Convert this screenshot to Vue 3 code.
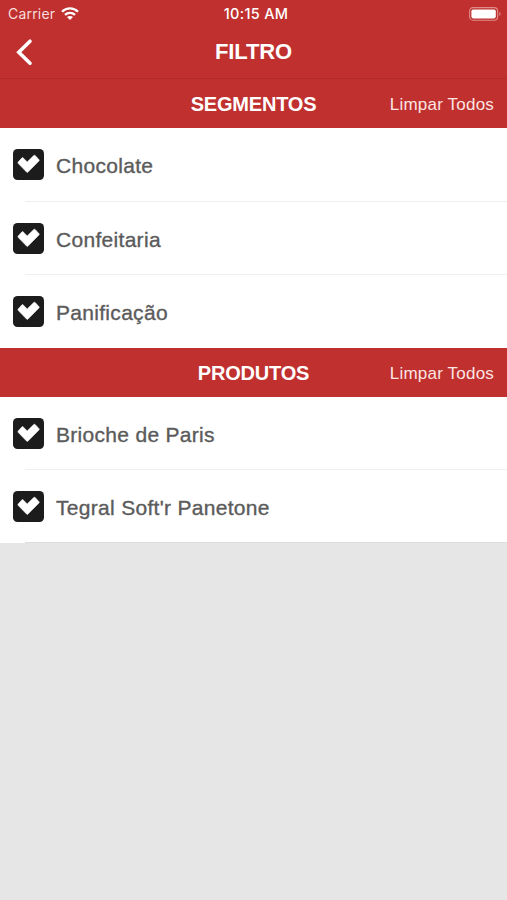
<script setup>
const sections = [
  { title: 'SEGMENTOS', key: 'segmentos', items: ['Chocolate', 'Confeitaria', 'Panificação'] },
  { title: 'PRODUTOS', key: 'produtos', items: ['Brioche de Paris', "Tegral Soft'r Panetone"] }
]
</script>

<template>
  <main class="screen">
    <header class="top">
      <div class="status">
        <div class="carrier">
          <span>Carrier</span>
          <svg class="wifi" width="18" height="13" viewBox="0 0 18 13" fill="none" stroke="#fff" stroke-width="2.3">
            <path d="M1 4.7C5.5.2 12.5.2 17 4.7M4 7.9c2.8-2.8 7.2-2.8 10 0" />
            <path d="M9 13 6 10c1.7-1.5 4.3-1.5 6 0Z" fill="#fff" stroke="none" />
          </svg>
        </div>
        <span class="time">10:15 AM</span>
        <svg class="battery" width="33" height="14" viewBox="0 0 33 14">
          <rect x=".6" y=".6" width="28" height="12.6" rx="3.4" fill="none" stroke="#dd8d8a" stroke-width="1.1" />
          <rect x="2.4" y="2.4" width="24.4" height="9" rx="1.8" fill="#fff" />
          <path d="M30.3 4.7c1.6.6 1.6 3.8 0 4.4Z" fill="#dd8d8a" />
        </svg>
      </div>
      <div class="nav">
        <svg class="back" width="18" height="28" viewBox="0 0 18 28" fill="none" stroke="#fff" stroke-width="3.6" stroke-linecap="round">
          <path d="M15 3.2 3.8 14.2 15 25.2" />
        </svg>
        <h1>FILTRO</h1>
      </div>
    </header>
    <section v-for="section in sections" :key="section.key" :class="section.key">
      <div class="bar">
        <h2>{{ section.title }}</h2>
        <span class="clear">Limpar Todos</span>
      </div>
      <ul>
        <li v-for="item in section.items" :key="item">
          <svg class="check" width="31" height="31" viewBox="0 0 31 31">
            <rect width="31" height="31" rx="4.5" fill="#1c1c1d" />
            <path d="M5.2 13 9 8.8Q9.5 8.3 10 8.8L14.2 12.9 20.8 6.5Q21.5 6 22.2 6.6L26 10.7Q26.5 11.4 25.9 12L15 23.1Q14.3 23.8 13.6 23.1L5.3 14.5Q4.6 13.7 5.2 13Z" fill="#fff" stroke="#fff" stroke-width=".6" />
          </svg>
          <span class="label">{{ item }}</span>
        </li>
      </ul>
    </section>
  </main>
</template>

<style>
body { margin: 0; background: #e6e6e6; }
</style>

<style scoped>
.screen {
  height: 900px;
  overflow: hidden;
  background: #e6e6e6;
  font-family: "Liberation Sans", Arial, sans-serif;
  color: #fff;
}
h1, h2, ul { margin: 0; padding: 0; }
.top {
  box-sizing: border-box;
  height: 79px;
  background: #bf302f;
  border-bottom: 1px solid #b32b29;
}
.status {
  display: grid;
  grid-template-columns: 1fr auto 1fr;
  align-items: center;
  height: 27px;
  padding: 0 6px 0 8px;
  font-family: Inter, sans-serif;
  font-size: 14px;
}
.carrier { display: flex; align-items: center; gap: 6px; color: #f8dddc; letter-spacing: .2px; }
.time { padding-left: 3px; font-weight: 500; font-size: 14.5px; letter-spacing: .3px; }
.battery { justify-self: end; margin-right: -1px; }
.nav {
  display: grid;
  grid-template-columns: 1fr auto 1fr;
  align-items: center;
  height: 50px;
  padding: 0 15px;
}
h1 { font-size: 22px; line-height: 26px; letter-spacing: -.1px; }
.bar {
  display: grid;
  grid-template-columns: 1fr auto 1fr;
  align-items: center;
  height: 49px;
  padding: 0 13px;
  background: #bf302f;
}
h2 { grid-column: 2; font-size: 20px; line-height: 24px; letter-spacing: -.2px; }
.clear { justify-self: end; padding-top: 2px; font-size: 17px; letter-spacing: .2px; color: #fbe5e3; }
ul { list-style: none; background: #fff; }
li {
  display: flex;
  align-items: center;
  box-sizing: border-box;
  height: 73px;
  padding-left: 13px;
  gap: 12px;
  background: linear-gradient(#eee, #eee) 25px 100% / 100% 1px no-repeat;
}
.segmentos li:first-child { height: 74px; padding-bottom: 1px; }
.segmentos li:last-child { background: none; }
.produtos li:last-child { background-image: linear-gradient(#ddd, #ddd); }
.check { flex: none; }
.label {
  padding-top: 2px;
  color: #5b5b5b;
  font-size: 21px;
  line-height: 26px;
  letter-spacing: .3px;
  -webkit-text-stroke: .35px #5b5b5b;
}
</style>
